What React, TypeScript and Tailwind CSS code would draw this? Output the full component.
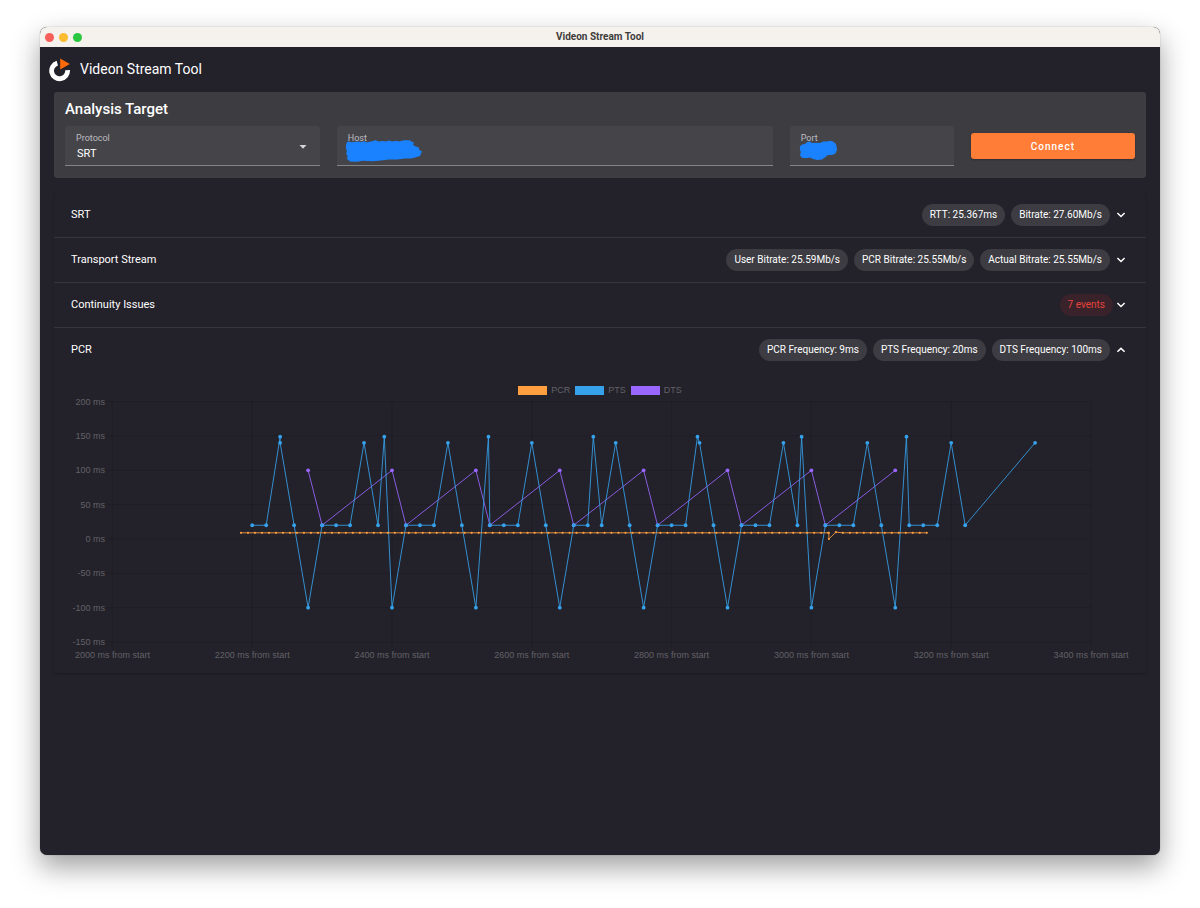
import { useState, type ReactNode } from "react";

type Point = [number, number];

const X = (ms: number) => 58.4 + (ms - 2000) * 0.699;
const Y = (ms: number) => 143 - ms * 0.687;

const DTS: Point[] = [];
for (let t = 2280; t <= 3120; t += 120) {
  DTS.push([t, 100]);
  if (t < 3120) DTS.push([t + 20, 20]);
}

const PTS: Point[] = [
  [2200, 20], [2220, 20], [2240, 149], [2240, 140], [2260, 20], [2280, -100],
  [2300, 20], [2320, 20], [2340, 20], [2360, 140], [2380, 20], [2389, 149], [2400, -100],
  [2420, 20], [2440, 20], [2460, 20], [2480, 140], [2500, 20], [2520, -100], [2538, 149],
  [2540, 20], [2560, 20], [2580, 20], [2600, 140], [2620, 20], [2640, -100],
  [2660, 20], [2680, 20], [2688, 149], [2700, 20], [2720, 140], [2740, 20], [2760, -100],
  [2780, 20], [2800, 20], [2820, 20], [2837, 149], [2840, 140], [2860, 20], [2880, -100],
  [2900, 20], [2920, 20], [2940, 20], [2960, 140], [2980, 20], [2986, 149], [3000, -100],
  [3020, 20], [3040, 20], [3060, 20], [3080, 140], [3100, 20], [3120, -100], [3136, 149],
  [3140, 20], [3160, 20], [3180, 20], [3200, 140], [3220, 20], [3320, 140],
];

const PCR: Point[] = [];
for (let t = 2184; t <= 3024; t += 10) PCR.push([t, 9]);
PCR.push([3025, 9], [3025, 0], [3035, 10]);
for (let t = 3045; t <= 3165; t += 10) PCR.push([t, 9]);

const SERIES = [
  { name: "DTS", color: "#9966ff", points: DTS, r: 1.9 },
  { name: "PTS", color: "#36a2eb", points: PTS, r: 1.9 },
  { name: "PCR", color: "#ff9f40", points: PCR, r: 1.1 },
];

const LEGEND = [
  { name: "PCR", swatch: "bg-[#ff9f40]" },
  { name: "PTS", swatch: "bg-[#36a2eb]" },
  { name: "DTS", swatch: "bg-[#9966ff]" },
];

const X_TICKS = [2000, 2200, 2400, 2600, 2800, 3000, 3200, 3400];
const Y_TICKS = [200, 150, 100, 50, 0, -50, -100, -150];

function Chart() {
  return (
    <svg
      viewBox="0 0 1092 265"
      className="block w-full font-['Liberation_Sans',sans-serif] text-[9px]"
      role="img"
      aria-label="PCR, PTS and DTS intervals"
    >
      {X_TICKS.map((t) => (
        <g key={t}>
          <line x1={X(t)} x2={X(t)} y1={Y(200)} y2={Y(-150) + 5} stroke="#000" strokeOpacity="0.13" />
          <text x={X(t)} y={262} textAnchor="middle" fill="#626167">
            {t} ms from start
          </text>
        </g>
      ))}
      {Y_TICKS.map((t) => (
        <g key={t}>
          <line x1={X(2000) - 5} x2={X(3400)} y1={Y(t)} y2={Y(t)} stroke="#000" strokeOpacity="0.13" />
          <text x={51} y={Y(t) + 3} textAnchor="end" fill="#626167">
            {t} ms
          </text>
        </g>
      ))}
      {SERIES.map((s) => (
        <g key={s.name} fill={s.color}>
          <polyline
            points={s.points.map(([x, y]) => `${X(x)},${Y(y)}`).join(" ")}
            fill="none"
            stroke={s.color}
            strokeOpacity="0.85"
            strokeWidth="1"
          />
          {s.points.map(([x, y], i) => (
            <circle key={i} cx={X(x)} cy={Y(y)} r={s.r} />
          ))}
        </g>
      ))}
    </svg>
  );
}

function Chevron({ up }: { up: boolean }) {
  return (
    <svg viewBox="0 0 12 12" className="size-3" fill="none" stroke="#fff" strokeWidth="1.5" aria-hidden="true">
      <path d={up ? "M2.4 7.8 6 4.4l3.6 3.4" : "M2.4 4 6 7.5l3.6-3.5"} />
    </svg>
  );
}

function Section({
  title,
  chips,
  alert,
  defaultOpen = false,
  children,
}: {
  title: string;
  chips: string[];
  alert?: boolean;
  defaultOpen?: boolean;
  children?: ReactNode;
}) {
  const [open, setOpen] = useState(defaultOpen);
  return (
    <section className="border-b border-[#37363d] last:border-b-0">
      <button
        type="button"
        aria-expanded={open}
        onClick={() => setOpen(!open)}
        className="flex h-11 w-full items-center justify-between pr-[19px] pl-[17px] text-left"
      >
        <span className="text-[11px]">{title}</span>
        <span className={alert ? "flex items-center gap-[2px]" : "flex items-center gap-[5px]"}>
          <span className="flex items-center gap-[6px]">
            {chips.map((chip) => (
              <span
                key={chip}
                className={
                  alert
                    ? "rounded-full bg-[#3a222a] px-2 text-[10px] leading-[22px] text-[#e5443c]"
                    : "rounded-full bg-[#3d3c42] px-2 text-[10px] leading-[22px]"
                }
              >
                {chip}
              </span>
            ))}
          </span>
          <Chevron up={open} />
        </span>
      </button>
      {open && children}
    </section>
  );
}

const FIELD = "relative flex h-10 flex-col rounded-t-[3px] border-b border-[#84838a] bg-[#454449]";
const LABEL = "absolute top-[6px] left-[11px] text-[9px] leading-3 text-[#bdbcc1]";
const CONTROL = "h-full w-full appearance-none bg-transparent px-3 pt-[17px] text-[11px] text-white outline-none";

export default function App() {
  return (
    <div className="flex min-h-screen bg-white px-10 pt-[27px] pb-[53px] font-[Roboto,sans-serif] text-white">
      <div className="flex flex-1 flex-col overflow-hidden rounded-[7px] bg-[#23212a] shadow-[0_12px_28px_rgba(0,0,0,0.38),0_0_1px_rgba(0,0,0,0.5)]">
        <div className="grid h-5 grid-cols-3 items-center bg-[#f5f1ed] px-[5px]">
          <div className="flex gap-[5px]">
            <span className="size-[9px] rounded-full bg-[#f65f57]" />
            <span className="size-[9px] rounded-full bg-[#fbbc2f]" />
            <span className="size-[9px] rounded-full bg-[#2bc740]" />
          </div>
          <div className="text-center text-[10px] leading-[18px] font-bold text-[#3f3d3b]">Videon Stream Tool</div>
        </div>

        <header className="flex h-[45px] items-center gap-[9px] px-[9px]">
          <svg viewBox="0 0 22 24" className="h-6 w-[22px]" aria-hidden="true">
            <path d="M8.3 5.1A8 8 0 1 0 18.6 12.2" fill="none" stroke="#fff" strokeWidth="4.8" />
            <path d="M11.2 0.5 20.8 6l-9.6 5.6z" fill="#fc6a0a" />
          </svg>
          <h1 className="text-[14px]">Videon Stream Tool</h1>
        </header>

        <main className="flex flex-col gap-[15px] px-[14px]">
          <form
            onSubmit={(e) => e.preventDefault()}
            className="rounded-[3px] bg-[#3d3c41] px-[11px] pt-[7px] pb-3"
          >
            <h2 className="pb-[7px] text-[15px] leading-5 font-medium">Analysis Target</h2>
            <div className="grid grid-cols-12 items-center gap-[17px]">
              <div className={`${FIELD} col-span-3`}>
                <label htmlFor="protocol" className={LABEL}>Protocol</label>
                <select id="protocol" className={CONTROL}>
                  <option>SRT</option>
                </select>
                <svg viewBox="0 0 8 4" className="pointer-events-none absolute top-[19px] right-[13px] h-1 w-2" aria-hidden="true">
                  <path d="M0.5 0h7L4 3.8z" fill="#d6d6d8" />
                </svg>
              </div>
              <div className={`${FIELD} col-span-5`}>
                <label htmlFor="host" className={LABEL}>Host</label>
                <input id="host" className={CONTROL} />
                <svg viewBox="0 0 78 24" className="pointer-events-none absolute top-[13px] left-2 h-6 w-[78px]" aria-hidden="true">
                  <path
                    d="M1 6 2 3 4 2.4 6 3.2 13 2.6 16 3 19 2.2 22 3.2 26 2.6 29 1.8 31 1 33 2.4 38 2 41 2.6 44 1.6 47 2.4 51 1.8 54 2.6 58 1.6 61 1 63 1.4 65 1.2 66 2.6 69 3.6 68 6 71 7.4 74 8.4 74 10.6 77 12.6 76 14.6 75 17 70 18.4 66 19.6 60 19.4 52 20.4 44 20.4 36 21.4 28 22.2 18 21.8 12 22.8 5 22.4 2 20 2.6 17 1.2 15 1.8 12 0.8 9z"
                    fill="#1a82ff"
                  />
                </svg>
              </div>
              <div className={`${FIELD} col-span-2`}>
                <label htmlFor="port" className={LABEL}>Port</label>
                <input id="port" className={CONTROL} />
                <svg viewBox="0 0 40 22" className="pointer-events-none absolute top-[14px] left-[9px] h-[22px] w-10" aria-hidden="true">
                  <path
                    d="M1 6.4 3 4.4 6 4 8 2.2 11 1.6 13 3 17 2.8 21 3 24 1.6 28 1.4 31 0.8 34 1.6 37 4 37.6 7 38 10 36.4 13.4 33 15 29 15 26.4 17 23 19.4 18 20 14 19 11 17.4 7 18.2 3 17.8 1 15.4 1.8 12 0.8 9z"
                    fill="#1a82ff"
                  />
                </svg>
              </div>
              <button
                type="submit"
                className="col-span-2 h-[26px] rounded-[3px] bg-[#ff7d36] text-[10px] font-medium tracking-[1px] shadow-[0_1px_2px_rgba(0,0,0,0.25)]"
              >
                Connect
              </button>
            </div>
          </form>

          <div className="rounded-[3px] shadow-[0_1px_2px_rgba(0,0,0,0.25)]">
            <Section title="SRT" chips={["RTT: 25.367ms", "Bitrate: 27.60Mb/s"]} />
            <Section
              title="Transport Stream"
              chips={["User Bitrate: 25.59Mb/s", "PCR Bitrate: 25.55Mb/s", "Actual Bitrate: 25.55Mb/s"]}
            />
            <Section title="Continuity Issues" chips={["7 events"]} alert />
            <Section
              title="PCR"
              chips={["PCR Frequency: 9ms", "PTS Frequency: 20ms", "DTS Frequency: 100ms"]}
              defaultOpen
            >
              <div className="pt-3 pb-3">
                <ul className="flex justify-center gap-[5px] font-['Liberation_Sans',sans-serif] text-[9px] leading-3 text-[#626167]">
                  {LEGEND.map((l) => (
                    <li key={l.name} className="flex items-center gap-1">
                      <span className={`h-[9px] w-[29px] ${l.swatch}`} />
                      {l.name}
                    </li>
                  ))}
                </ul>
                <Chart />
              </div>
            </Section>
          </div>
        </main>
      </div>
    </div>
  );
}
